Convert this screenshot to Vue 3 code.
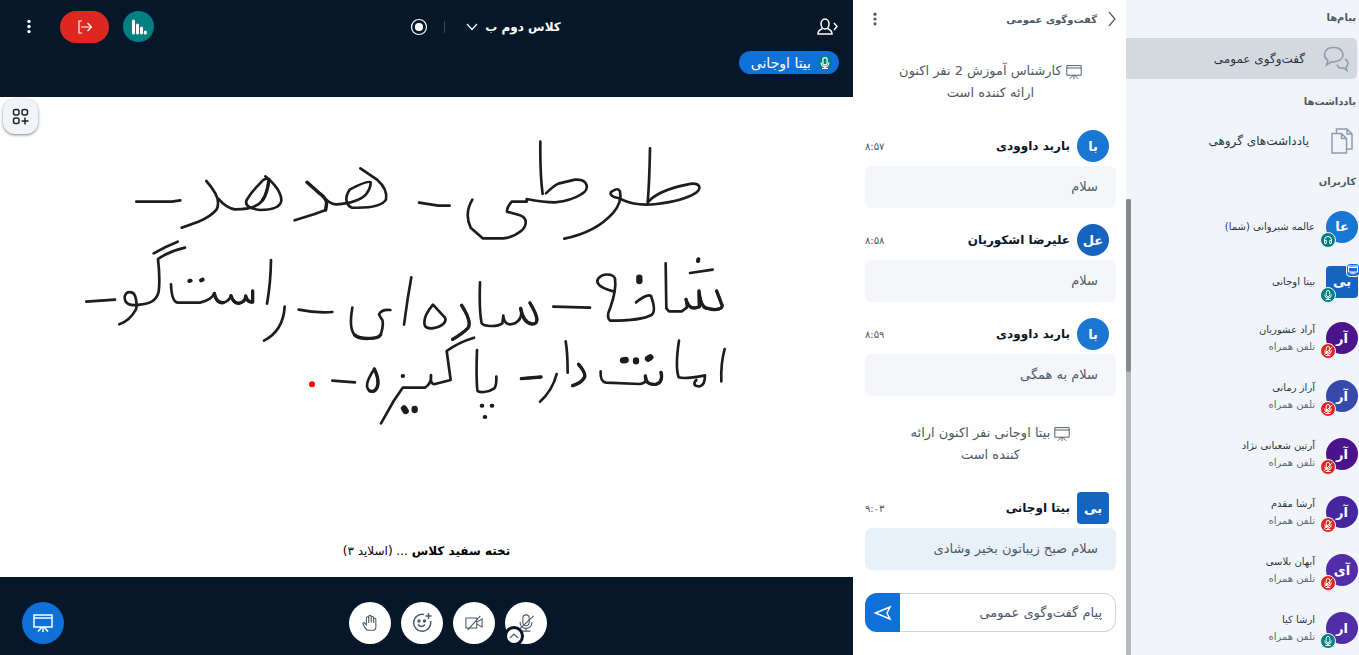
<script setup>
  import { ref } from "vue";

  const draft = ref("");

  // chat history, system notices and user messages in order
  const messages = [
    { id: 1, system: true, text: "کارشناس آموزش 2 نفر اکنون ارائه کننده است" },
    { id: 2, initials: "با", name: "باربد داوودی", time: "۸:۵۷", text: "سلام", color: "#1976d2" },
    { id: 3, initials: "عل", name: "علیرضا اشکوریان", time: "۸:۵۸", text: "سلام", color: "#1565c0" },
    { id: 4, initials: "با", name: "باربد داوودی", time: "۸:۵۹", text: "سلام به همگی", color: "#1976d2" },
    { id: 5, system: true, text: "بیتا اوجانی نفر اکنون ارائه کننده است" },
    { id: 6, initials: "بی", name: "بیتا اوجانی", time: "۹:۰۳", text: "سلام صبح زیباتون بخیر وشادی", color: "#1565c0", moderator: true },
  ];

  const users = [
    { initials: "عا", name: "عالمه شیروانی (شما)", color: "#1976d2", audio: "listen" },
    { initials: "بی", name: "بیتا اوجانی", color: "#1565c0", audio: "mic", moderator: true },
    { initials: "آر", name: "آراد عشوریان", color: "#4a148c", audio: "muted", mobile: true },
    { initials: "آر", name: "آراز رمانی", color: "#3949ab", audio: "muted", mobile: true },
    { initials: "آر", name: "آرتین شعبانی نژاد", color: "#4a148c", audio: "muted", mobile: true },
    { initials: "آر", name: "آرشا مقدم", color: "#4527a0", audio: "muted", mobile: true },
    { initials: "آی", name: "آیهان بلاسی", color: "#512da8", audio: "muted", mobile: true },
    { initials: "ار", name: "ارشا کیا", color: "#512da8", audio: "mic", mobile: true },
  ];

  function send() {
    draft.value = "";
  }
</script>

<template>
  <div class="app" dir="rtl">
    <!-- shared icons -->
    <svg class="sprite" aria-hidden="true">
      <symbol id="dots" viewBox="0 0 20 20">
        <circle cx="10" cy="4" r="2" /><circle cx="10" cy="10" r="2" /><circle cx="10" cy="16" r="2" />
      </symbol>
      <symbol id="board" viewBox="0 0 20 20">
        <path d="M1 2H19V14H1ZM1 5H19M10 14V19M9 14L5 18.500M11 14L15 18.500" />
      </symbol>
      <symbol id="mic" viewBox="0 0 20 20">
        <rect x="6.500" y="1" width="7" height="12" rx="3.500" />
        <path d="M3.500 9V10A6.500 6 0 0 0 16.500 10V9M10 16V18.500M5 19H15" />
      </symbol>
      <symbol id="muted" viewBox="0 0 20 20">
        <rect x="6.500" y="1" width="7" height="12" rx="3.500" />
        <path d="M3.500 9V10A6.500 6 0 0 0 16.500 10V9M10 16V18.500M5 19H15M1.500 18L18.500 2" />
      </symbol>
      <symbol id="listen" viewBox="0 0 20 20">
        <path d="M3 15V10A7 7 0 0 1 17 10V15M3 11H6.500V17H3ZM17 11H13.500V17H17Z" />
      </symbol>
    </svg>

    <aside class="sidebar">
      <h2>پیام‌ها</h2>
      <button class="side-item active">
        <svg class="icon chat-icon" viewBox="0 0 26 26">
          <path d="M3.500 19L5 14.500C-1 10 1 1.500 10.500 1.500C20 1.500 23 10.500 16 14.500C13 16 10.500 16 8.500 15.800Z" />
          <path d="M22 13C26 15 25.500 19.500 23 21L24 24.500L20.500 22C18 22.500 15 21.500 14 18.500" />
        </svg>
        <span>گفت‌وگوی عمومی</span>
      </button>
      <h2>یادداشت‌ها</h2>
      <button class="side-item notes">
        <svg class="icon notes-icon" viewBox="0 0 22 26">
          <path d="M1 5.500H10.500L15.500 10.500V25H1ZM10.500 5.500V10.500H15.500M5.500 5V1H16L21 6V21H16M16 1V6H21" />
        </svg>
        <span>یادداشت‌های گروهی</span>
      </button>
      <h2 class="users-title">کاربران</h2>
      <div class="users">
        <ul>
          <li v-for="user in users" :key="user.name" :class="{ tall: user.mobile }">
            <div class="avatar" :class="{ square: user.moderator }" :style="{ background: user.color }">
              {{ user.initials }}
              <span v-if="user.moderator" class="presenter"><svg class="icon"><use href="#board" /></svg></span>
              <span class="audio" :class="user.audio"><svg class="icon"><use :href="'#' + user.audio" /></svg></span>
            </div>
            <div class="user-text">
              <span class="user-name">{{ user.name }}</span>
              <span v-if="user.mobile" class="user-sub">تلفن همراه</span>
            </div>
          </li>
        </ul>
        <div class="scroll-track"><div class="scroll-thumb"></div></div>
      </div>
    </aside>

    <section class="chat">
      <header>
        <button class="hide-chat">
          <svg class="icon" viewBox="0 0 10 16"><path d="M2 1L8 8L2 15" /></svg>
          <span>گفت‌وگوی عمومی</span>
        </button>
        <button class="chat-menu" aria-label="گزینه‌ها"><svg><use href="#dots" /></svg></button>
      </header>

      <div class="messages">
        <template v-for="m in messages" :key="m.id">
          <p v-if="m.system" class="system"><svg class="icon"><use href="#board" /></svg> {{ m.text }}</p>
          <article v-else>
            <div class="message-head">
              <div class="avatar" :class="{ square: m.moderator }" :style="{ background: m.color }">{{ m.initials }}</div>
              <strong>{{ m.name }}</strong>
              <time>{{ m.time }}</time>
            </div>
            <p class="bubble" :class="{ highlight: m.moderator }">{{ m.text }}</p>
          </article>
        </template>
      </div>

      <form @submit.prevent="send">
        <input v-model="draft" type="text" placeholder="پیام گفت‌وگوی عمومی" aria-label="پیام گفت‌وگوی عمومی" />
        <button class="send" aria-label="ارسال">
          <svg class="icon" viewBox="0 0 18 16"><path d="M1.500 8L16 2L13 8L16 14Z" /></svg>
        </button>
      </form>
    </section>

    <main>
      <header class="navbar">
        <div class="nav-row">
          <button class="users-toggle" aria-label="کاربران">
            <svg class="icon" viewBox="0 0 22 18">
              <ellipse cx="8" cy="6" rx="4" ry="5" />
              <path d="M5.500 10.500C3 11.500 1 12.500 1 16H15C15 12.500 13 11.500 10.500 10.500M17 5L20 8.500L17 12" />
            </svg>
          </button>
          <div class="room">
            <button class="room-name">
              کلاس دوم ب
              <svg class="icon" viewBox="0 0 14 8"><path d="M2 1L7 6.500L12 1" /></svg>
            </button>
            <span class="divider"></span>
            <button class="record" aria-label="ضبط">
              <svg class="icon" viewBox="0 0 18 18"><circle cx="9" cy="9" r="7.500" /><circle class="solid" cx="9" cy="9" r="3.500" /></svg>
            </button>
          </div>
          <div class="nav-actions">
            <button class="stats" aria-label="اتصال">
              <svg viewBox="0 0 16 16"><path d="M2.500 2V14M6.500 6V14M10.500 9V14M14.300 13V14" /></svg>
            </button>
            <button class="leave" aria-label="ترک کلاس">
              <svg class="icon" viewBox="0 0 16 16"><path d="M5 2H2V14H5M4 8H14M10.500 4L14.500 8L10.500 12" /></svg>
            </button>
            <button class="nav-menu" aria-label="گزینه‌ها"><svg><use href="#dots" /></svg></button>
          </div>
        </div>
        <div class="talking">
          <button><span class="talk-mic"><svg class="icon"><use href="#mic" /></svg></span>بیتا اوجانی</button>
        </div>
      </header>

      <div class="whiteboard">
        <button class="apps" aria-label="ابزارها">
          <svg class="icon" viewBox="0 0 18 18">
            <rect x="1.500" y="1.500" width="5.500" height="5.500" rx="2" />
            <rect x="10" y="1.500" width="5.500" height="5.500" rx="2" />
            <rect x="1.500" y="10" width="5.500" height="5.500" rx="2" />
            <path d="M13 9.500V16.500M9.500 13H16.500" />
          </svg>
        </button>
        <!-- pen strokes on the slide -->
        <svg class="ink" viewBox="0 0 2559 1284" preserveAspectRatio="xMidYMin meet" aria-hidden="true">
          <g transform="translate(180 99)">
            <path d="M229 215H335L361 211M439 153Q456 172 466 190Q480 216 470 238Q452 260 415 275L365 293M474 205Q500 235 525 238Q590 238 608 210Q622 190 627 148Q616 141 600 160Q575 185 560 210C552 230 575 236 600 240Q660 240 664 212Q664 178 616 139" />
            <path d="M741 157L780 191Q798 205 800 218L797 240L762 253L704 271M785 196Q812 225 830 223Q895 218 918 193Q932 176 932 157Q924 150 870 178C852 203 858 224 875 233Q962 236 978 209Q984 178 950 148L901 115" />
            <path d="M281 370Q315 350 353 335M375 353Q330 363 294 387Q300 440 297 475C296 511 270 522 240 524Q193 532 194 500C198 481 220 484 225 497Q233 521 228 538Q210 571 178 583M79 515L165 509" />
            <path d="M333 463Q335 518 355 518H420Q455 510 463 490Q468 520 490 518Q508 513 513 497Q520 520 537 520Q558 514 557 498Q562 518 578 516V483M633 390Q632 460 621 521M674 530Q670 602 612 632M716 539Q770 550 817 546" />
            <path d="M877 533Q866 595 884 615C898 629 954 629 962 614Q975 575 962 562L957 553Q965 537 991 540M817 752L885 757M943 717Q907 770 930 783C955 790 962 755 943 717" />
            <path class="thick" d="M608 210Q622 190 627 148M741 157L780 191Q798 205 800 218L797 240M463 490Q468 520 490 518M513 497Q520 520 537 520Q558 514 557 498Q562 518 578 516V483M884 615C898 629 954 629 962 614M930 783C955 790 962 755 943 717" />
            <path class="spot" d="M388 453L392 452M423 451L428 449" />
            <circle class="laser" cx="756" cy="763" r="9" />
          </g>
          <g transform="translate(1200 99)">
            <path d="M421 35Q420 135 428 192M438 190Q460 168 475 161L525 149C565 146 570 178 545 192Q515 212 465 217Q430 217 380 207V215H335Q320 233 321 245L360 256C385 265 380 290 362 304Q340 322 310 325H248L212 293Q192 251 217 209M57 218L115 227H149" />
            <path d="M750 55Q748 160 743 217Q775 181 860 164C903 153 907 177 885 190Q850 212 770 222C708 229 682 216 655 204C632 201 625 188 638 183Q654 172 660 184Q667 215 640 248Q588 307 493 326" />
            <path d="M870 429L938 419M797 400L799 535L807 544H845L861 532L858 508Q868 544 898 530L897 483Q902 535 923 535C948 543 975 537 964 520L950 483M708 517Q742 490 753 498Q770 545 754 555Q725 572 630 572Q618 560 630 536Q650 480 645 445C637 431 610 429 596 444C583 460 603 475 640 484M460 530L570 533" />
            <path d="M240 457Q237 542 245 580C253 589 290 592 307 580L310 557Q313 592 345 580Q370 565 362 535Q370 579 396 582Q428 583 390 519M185 526Q218 578 203 595Q188 610 158 628M99 524Q66 563 75 588C83 600 115 596 132 580Q141 567 132 560ZM34 442L24 500L12 584" />
            <path d="M-57 880L-19 813L8 773H75Q95 760 93 735Q90 765 105 762L152 750L140 663Q175 637 222 623M231 660Q228 740 232 780C234 790 265 788 283 775Q290 766 289 740M364 746L423 741M470 732Q457 782 420 815M497 634Q503 670 503 728M536 703Q560 732 553 743Q544 759 518 767" />
            <path d="M602 724Q600 755 618 758L720 762Q745 757 736 738Q736 766 768 763Q790 757 783 727M837 632Q825 710 836 742Q853 748 915 736Q915 765 900 769C880 769 880 760 889 750M974 657Q962 700 964 754" />
            <path class="thick" d="M858 508Q868 544 898 530L897 483Q902 535 923 535C948 543 975 537 964 520L950 483M362 535Q370 579 396 582Q428 583 390 519M185 526Q218 578 203 595Q188 610 158 628M536 703Q560 732 553 743Q544 759 518 767M736 738Q736 766 768 763Q790 757 783 727M364 746L423 741" />
            <path class="heavy" d="M12 835L17 843M44 837V840M669 691L677 690M708 691V694M744 686L751 682M718 443V453" />
            <path class="spot" d="M895 388L894 393M8 738H9M245 827H247M275 827H277M254 861H256" />
          </g>
        </svg>
        <p class="slide-title"><b>تخته سفید کلاس</b> ... (اسلاید ۳)</p>
      </div>

      <footer>
        <div class="media">
          <div class="mic-wrap">
            <button class="round" aria-label="میکروفون"><svg class="icon"><use href="#muted" /></svg></button>
            <button class="mic-more" aria-label="تغییر دستگاه"><svg class="icon" viewBox="0 0 10 6"><path d="M1 5L5 1L9 5" /></svg></button>
          </div>
          <button class="round" aria-label="دوربین">
            <svg class="icon" viewBox="0 0 20 20"><path d="M1 4.500H13V15.500H1ZM13 9L19 5.500V14.500L13 11M3 18L17 2" /></svg>
          </button>
          <button class="round smile" aria-label="واکنش">
            <svg class="icon" viewBox="0 0 20 20">
              <path d="M12 1.500A8.500 8.500 0 1 0 18.500 8M16.500 0V6M13.500 3H19.500M6 11.500Q9.500 15.500 13 11.500" />
              <circle class="solid" cx="7" cy="8" r="1" /><circle class="solid" cx="12.500" cy="8" r="1" />
            </svg>
          </button>
          <button class="round" aria-label="بلند کردن دست">
            <svg class="icon" viewBox="0 0 20 20">
              <path d="M7 18H14Q16.500 18 16.500 14V6Q16.500 4.500 15.300 4.500Q14 4.500 14 6V10M14 9V4Q14 2.500 12.600 2.500Q11.300 2.500 11.300 4V9.500M11.300 9V3Q11.300 1.500 10 1.500Q8.600 1.500 8.600 3V10M8.600 9V4.500Q8.600 3 7.300 3Q6 3 6 4.500V12L4 10Q2.500 9 2 10.500Q4 16 7 18" />
            </svg>
          </button>
        </div>
        <button class="present" aria-label="ارائه"><svg class="icon"><use href="#board" /></svg></button>
      </footer>
    </main>
  </div>
</template>

<style>
body {
  margin: 0;
}
</style>

<style scoped>
.app {
  display: flex;
  height: 100vh;
  overflow: hidden;
  font-family: "DejaVu Sans", sans-serif;
  font-size: 12px;
  color: #4e5a66;
  background: #fff;
}

button {
  display: flex;
  align-items: center;
  justify-content: center;
  border: 0;
  padding: 0;
  background: none;
  color: inherit;
  font: inherit;
  cursor: pointer;
}

h2, p, ul {
  margin: 0;
  padding: 0;
}

svg {
  display: block;
  fill: currentColor;
}

.icon {
  fill: none;
  stroke: currentColor;
  stroke-width: 1.2;
}

.solid {
  fill: currentColor;
}

.sprite {
  position: absolute;
  width: 0;
  height: 0;
}

.avatar {
  position: relative;
  display: flex;
  align-items: center;
  justify-content: center;
  flex: none;
  width: 32px;
  height: 32px;
  border-radius: 50%;
  color: #fff;
  font-size: 13px;
  font-weight: bold;
}

.avatar.square {
  border-radius: 4px;
}

/* right sidebar */
.sidebar {
  display: flex;
  flex-direction: column;
  flex: 0 0 233px;
  background: #f1f5f9;
}

.sidebar h2 {
  padding: 0 3px;
  font-size: 10px;
  line-height: 36px;
  color: #4e5a66;
}

.sidebar .users-title {
  line-height: 35px;
}

.side-item {
  flex: none;
  justify-content: flex-start;
  gap: 18px;
  height: 41px;
  padding: 0 8px;
  color: #2a3542;
  font-size: 12px;
}

.side-item.active {
  margin: 2px 2px 5px 0;
  border-radius: 0 5px 5px 0;
  background: #d4d9df;
}

.side-item.notes {
  gap: 22px;
  margin-bottom: 3px;
  padding: 0 6px;
}

.side-item .icon {
  color: #8b9cae;
  stroke-width: 1.5;
}

.chat-icon {
  width: 26px;
  height: 26px;
}

.notes-icon {
  width: 22px;
  height: 26px;
}

.users {
  display: flex;
  flex: 1;
  min-height: 0;
}

.users ul {
  flex: 1;
  overflow: hidden;
  list-style: none;
}

.users li {
  display: flex;
  align-items: center;
  gap: 11px;
  height: 55px;
  padding-right: 1px;
}

.users li.tall {
  height: 58px;
}

.user-text {
  display: flex;
  flex-direction: column;
  font-size: 10px;
  line-height: 17px;
  color: #2a3542;
}

.user-sub {
  color: #5f6b78;
}

.audio {
  position: absolute;
  right: 22px;
  bottom: -5px;
  display: flex;
  align-items: center;
  justify-content: center;
  width: 14px;
  height: 14px;
  border: 1px solid #f1f5f9;
  border-radius: 50%;
  background: #008081;
}

.audio.muted {
  background: #df2721;
}

.audio .icon {
  width: 10px;
  height: 10px;
  stroke-width: 2;
}

.presenter {
  position: absolute;
  top: -3px;
  left: 20px;
  padding: 1px;
  border: 1px solid #fff;
  border-radius: 4px;
  background: #0f70d7;
}

.presenter .icon {
  width: 10px;
  height: 10px;
  stroke-width: 2;
}

.scroll-track {
  flex: none;
  width: 5px;
  background: #b5b8bc;
}

.scroll-thumb {
  height: 38%;
  border-radius: 3px;
  background: #868889;
}

/* chat */
.chat {
  display: flex;
  flex-direction: column;
  flex: 0 0 273px;
}

.chat header {
  display: flex;
  align-items: center;
  justify-content: space-between;
  height: 38px;
  padding: 0 9px 0 12px;
}

.hide-chat {
  gap: 10px;
  font-size: 10px;
  font-weight: bold;
}

.hide-chat .icon {
  width: 10px;
  height: 16px;
}

.chat-menu svg {
  width: 20px;
  height: 16px;
}

.messages {
  flex: 1;
  padding: 22px 10px 0 12px;
}

.system {
  padding: 0 32px;
  font-size: 13px;
  line-height: 22px;
  text-align: center;
  margin-bottom: 26px;
}

article + .system {
  margin-top: 26px;
}

.system .icon {
  display: inline-block;
  width: 16px;
  height: 16px;
  vertical-align: middle;
}

article + article {
  margin-top: 16px;
}

.message-head {
  display: flex;
  align-items: center;
  gap: 7px;
  padding-right: 7px;
}

.message-head strong {
  flex: 1;
  font-size: 12px;
  color: #06172a;
}

time {
  font-size: 10px;
}

.bubble {
  margin-top: 4px;
  padding: 0 18px;
  border-radius: 6px;
  background: #f4f6fa;
  font-size: 13px;
  line-height: 42px;
}

.bubble.highlight {
  background: #e8f1f9;
}

form {
  display: flex;
  height: 39px;
  margin: 0 10px 23px 12px;
}

input {
  flex: 1;
  min-width: 0;
  box-sizing: border-box;
  border: 1px solid #cfd6dd;
  border-left: 0;
  border-radius: 0 12px 12px 0;
  padding: 0 13px;
  font: inherit;
  font-size: 13px;
}

input::placeholder {
  color: #4e5a66;
  opacity: 1;
}

.send {
  width: 35px;
  border-radius: 12px 0 0 12px;
  background: #0f70d7;
  color: #fff;
}

.send .icon {
  width: 18px;
  height: 16px;
  stroke-width: 1.5;
}

/* presentation area */
main {
  display: flex;
  flex-direction: column;
  flex: 1;
  min-width: 0;
}

.navbar {
  height: 97px;
  background: #06172a;
  color: #fff;
}

.nav-row {
  display: grid;
  grid-template-columns: auto 1fr auto;
  align-items: center;
  height: 51px;
  padding: 2px 14px 0 19px;
  box-sizing: border-box;
}

.users-toggle .icon {
  width: 22px;
  height: 18px;
  stroke-width: 1.5;
}

.room {
  display: flex;
  align-items: center;
  justify-content: center;
  gap: 16px;
}

.room-name {
  gap: 6px;
  font-size: 12px;
  font-weight: bold;
}

.room-name .icon {
  width: 14px;
  height: 8px;
}

.divider {
  width: 1px;
  height: 12px;
  margin-right: 4px;
  background: #3f4650;
}

.record .icon {
  width: 18px;
  height: 18px;
}

.nav-actions {
  display: flex;
  align-items: center;
}

.stats {
  width: 31px;
  height: 31px;
  margin-left: 14px;
  border-radius: 50%;
  background: #008081;
}

.stats svg {
  width: 16px;
  height: 16px;
  stroke: currentColor;
  stroke-width: 3;
  stroke-linecap: round;
}

.leave {
  width: 49px;
  height: 32px;
  margin-left: 21px;
  border-radius: 16px;
  background: #df2721;
}

.leave svg {
  width: 16px;
  height: 16px;
}

.nav-menu svg {
  width: 20px;
  height: 17px;
}

.talking {
  display: flex;
  padding-right: 14px;
}

.talking button {
  gap: 7px;
  height: 23px;
  padding: 0 7px 0 12px;
  border-radius: 12px;
  background: #0f70d7;
  font-size: 14px;
}

.talk-mic {
  padding: 1px;
  border-radius: 50%;
  background: #008081;
}

.talk-mic .icon {
  width: 12px;
  height: 12px;
  stroke-width: 2;
}

.whiteboard {
  position: relative;
  display: flex;
  flex-direction: column;
  flex: 1;
  min-height: 0;
}

.apps {
  position: absolute;
  top: 2px;
  left: 3px;
  width: 35px;
  height: 35px;
  border-radius: 12px;
  background: #f1f5f9;
  box-shadow: 0 1px 3px rgba(0, 0, 0, 0.5);
  color: #222;
}

.apps .icon {
  width: 18px;
  height: 18px;
  stroke-width: 1.5;
}

.ink {
  flex: 1;
  min-height: 0;
  width: 100%;
  fill: none;
  stroke: #1d1d1d;
  stroke-width: 8;
  stroke-linecap: round;
  stroke-linejoin: round;
}

.ink .thick {
  stroke-width: 10;
}

.ink .spot {
  stroke-width: 12;
}

.ink .heavy {
  stroke-width: 19;
}

.ink .laser {
  fill: #f00;
  stroke: none;
}

.slide-title {
  height: 52px;
  line-height: 52px;
  text-align: center;
  color: #000;
  font-size: 12px;
}

footer {
  display: flex;
  align-items: center;
  height: 78px;
  padding: 14px 22px 0;
  box-sizing: border-box;
  background: #06172a;
}

footer button {
  width: 42px;
  height: 42px;
  border-radius: 50%;
}

.media {
  display: flex;
  justify-content: center;
  flex: 1;
  gap: 10px;
}

.round {
  background: #fff;
  color: #4e5a66;
}

.round .icon {
  width: 18px;
  height: 18px;
}

.smile .icon {
  width: 20px;
  height: 20px;
  stroke-width: 1.5;
}

.mic-wrap {
  position: relative;
}

.mic-more {
  position: absolute;
  bottom: -2px;
  left: -1px;
  width: 20px;
  height: 20px;
  border: 3px solid #06172a;
  background: #fff;
  color: #4e5a66;
}

.mic-more .icon {
  width: 10px;
  height: 6px;
}

.present {
  background: #0f70d7;
  color: #fff;
}

.present .icon {
  width: 20px;
  height: 20px;
  stroke-width: 1.5;
}
</style>
